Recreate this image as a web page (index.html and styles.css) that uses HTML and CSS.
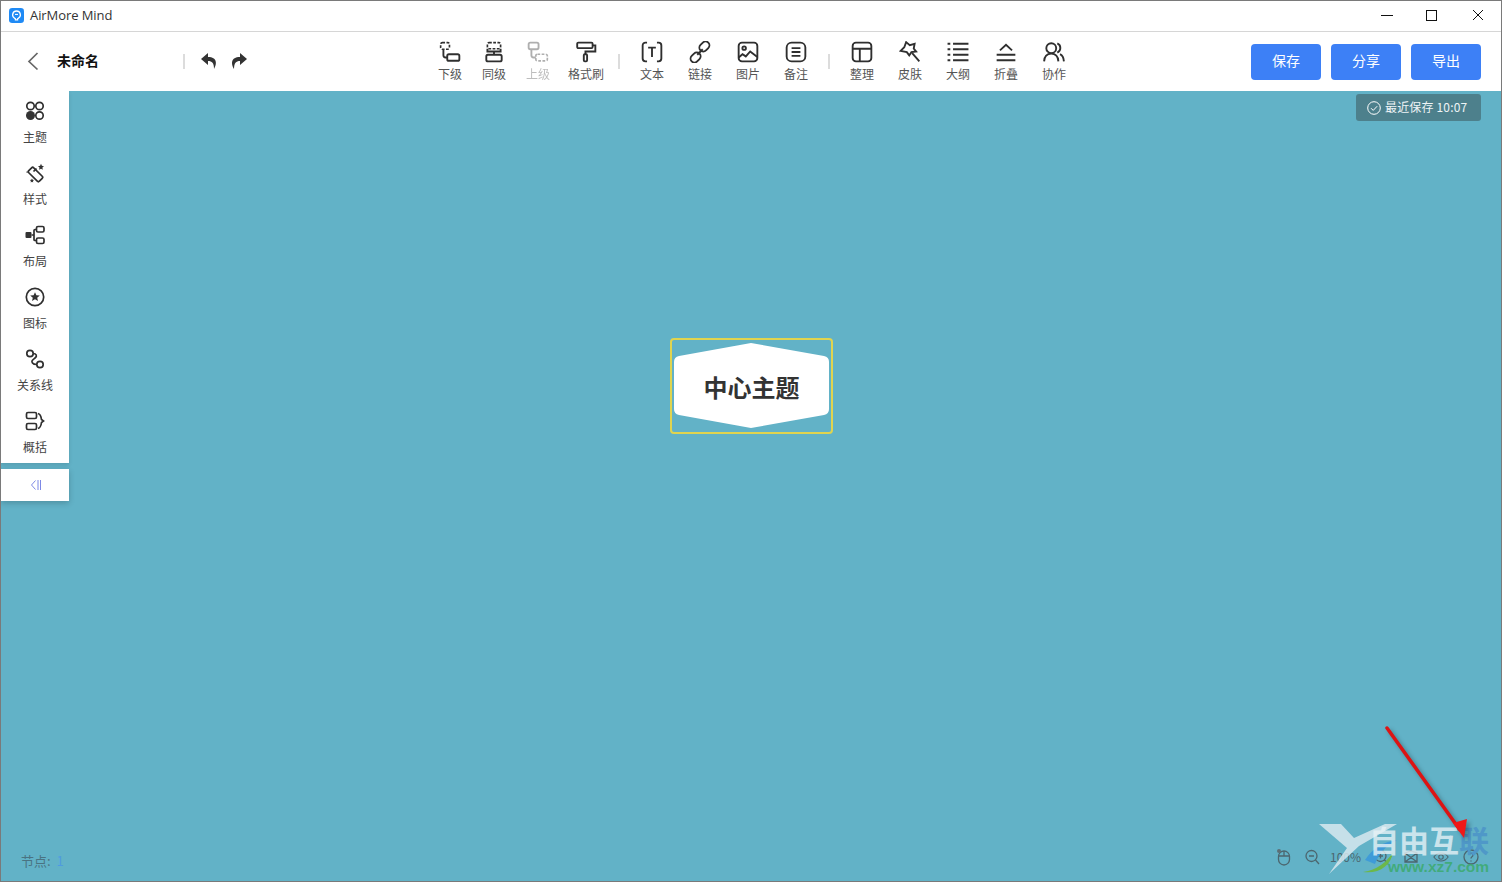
FILE: index.html
```html
<!DOCTYPE html>
<html lang="zh">
<head>
<meta charset="utf-8">
<title>AirMore Mind</title>
<link rel="stylesheet" href="styles.css">
</head>
<body>
<div class="window">
  <header class="titlebar">
    <svg class="app-logo" viewBox="0 0 14 14"><rect width="14" height="14" rx="3" fill="#1f8af5"/><path d="M7 2.800a3.600 3.600 0 0 1 2 6.600L8 10.200V11H6v-.8l-1-.8a3.600 3.600 0 0 1 2-6.600z" fill="none" stroke="#fff" stroke-width="1.200"/><path d="M5.600 6h2.800" stroke="#fff"/></svg>
    <span class="app-name">AirMore Mind</span>
    <div class="win-controls">
      <svg class="win-btn" viewBox="0 0 46 20"><path d="M18 10.500h12" stroke="#111" fill="none"/></svg>
      <svg class="win-btn" viewBox="0 0 46 20"><rect x="17.500" y="5.500" width="10" height="10" stroke="#111" fill="none"/></svg>
      <svg class="win-btn" viewBox="0 0 46 20"><path d="M18 5l10 10M28 5L18 15" stroke="#111" fill="none"/></svg>
    </div>
  </header>

  <nav class="toolbar">
    <div class="tb-left">
      <svg class="back" viewBox="0 0 12 20"><path d="M10.500 2L2 10.500l8.500 8" fill="none" stroke="#666" stroke-width="1.700"/></svg>
      <span class="doc-name">未命名</span>
      <i class="sep sep-doc"></i>
      <svg class="hist" viewBox="0 0 18 18"><path d="M8 1L1 7l7 6V9c4 0 6 2 6 8 3-5 3.500-12-6-12z" fill="#333"/></svg>
      <svg class="hist hist-redo" viewBox="0 0 18 18"><path d="M10 1l7 6-7 6V9c-4 0-6 2-6 8-3-5-3.500-12 6-12z" fill="#333"/></svg>
    </div>

    <div class="tb-center">
      <div class="tool w44"><svg viewBox="0 0 20 20"><rect x="1.500" y="1.500" width="8" height="6" rx="1.500" class="dash"/><rect x="7.500" y="12" width="11" height="6" rx="1.500" class="s"/><path d="M4 8v5a2 2 0 0 0 2 2h1.500" class="s"/></svg><span>下级</span></div>
      <div class="tool w44"><svg viewBox="0 0 20 20"><rect x="4" y="1.500" width="12" height="5.500" rx="1.500" class="dash"/><rect x="3" y="12.500" width="14" height="6" rx="1.500" class="s"/><path d="M4 7v2.500h12V7M10 9.500v3" class="s"/></svg><span>同级</span></div>
      <div class="tool w44 off"><svg viewBox="0 0 20 20"><rect x="1.500" y="1.500" width="9" height="6" rx="1.500" class="s"/><rect x="8" y="12" width="10.500" height="6" rx="1.500" class="dash"/><path d="M4 8v5a2 2 0 0 0 2 2h2" class="s"/></svg><span>上级</span></div>
      <div class="tool w48 gap-l"><svg viewBox="0 0 20 20"><rect x="2" y="1.500" width="14" height="5" rx="1" class="s"/><path d="M16 4h2.500v5.500H9.500V12" class="s"/><rect x="8" y="12" width="3" height="6.500" rx="1" class="s"/></svg><span>格式刷</span></div>
      <i class="sep sep-tool"></i>
      <div class="tool w48"><svg viewBox="0 0 20 20"><path d="M5.500 1.500H4A2.500 2.500 0 0 0 1.500 4v12A2.500 2.500 0 0 0 4 18.500h1.500M14.500 1.500H16A2.500 2.500 0 0 1 18.500 4v12a2.500 2.500 0 0 1-2.500 2.500h-1.500M6.500 6h7M10 6v8.500" class="s"/></svg><span>文本</span></div>
      <div class="tool w48"><svg viewBox="0 0 20 20"><rect x="9" y="1.500" width="10" height="7" rx="3.500" transform="rotate(-45 14 5)" class="s"/><rect x="1" y="11.500" width="10" height="7" rx="3.500" transform="rotate(-45 6 15)" class="s"/><path d="M7.500 12.500l5-5" class="s"/></svg><span>链接</span></div>
      <div class="tool w48"><svg viewBox="0 0 20 20"><rect x="1.500" y="1.500" width="17" height="17" rx="3" class="s"/><circle cx="6.500" cy="6.500" r="1.600" class="s"/><path d="M1.500 15l3.500-3 3 2 4-4.500 6.500 5" class="s"/></svg><span>图片</span></div>
      <div class="tool w48"><svg viewBox="0 0 20 20"><rect x="1.500" y="1.500" width="17" height="17" rx="4.500" class="s"/><path d="M6 6.500h8M6 10h8M6 13.500h8" class="s"/></svg><span>备注</span></div>
      <i class="sep sep-tool"></i>
      <div class="tool w48"><svg viewBox="0 0 20 20"><rect x="1.500" y="1.500" width="17" height="17" rx="3" class="s"/><path d="M1.500 7h17M8 7v11.500" class="s"/></svg><span>整理</span></div>
      <div class="tool w48"><svg viewBox="0 0 20 20"><path d="M6.500 1l3.300 2.800 4.400-1.300-.8 4.300 2.200 2.700-4.300.6-2 3-2.200-3L1.500 9l3.300-3.300z" class="s"/><path d="M12 11l6.500 7.500" class="s"/></svg><span>皮肤</span></div>
      <div class="tool w48"><svg viewBox="0 0 20 20"><path d="M.5 2.500h2.500M.5 7.500h2.500M.5 12.500h2.500M.5 17.500h2.500M5.500 2.500H19.500M5.500 7.500H19.500M5.500 12.500H19.500M5.500 17.500H19.500" class="s"/></svg><span>大纲</span></div>
      <div class="tool w48"><svg viewBox="0 0 20 20"><path d="M4.500 8.500L10 3.500l5.500 5M1.500 12.500h17M1.500 17.500h17" class="s"/></svg><span>折叠</span></div>
      <div class="tool w48"><svg viewBox="0 0 20 20"><circle cx="7.500" cy="6.500" r="4.500" class="s"/><path d="M1 18.500c.3-4.500 2.500-7 6.500-7s6.200 2.500 6.500 7M13 2.200a4.500 4.500 0 0 1 0 8.300M15.500 12c2 1 3.300 3.300 3.500 6.500" class="s"/></svg><span>协作</span></div>
    </div>

    <div class="tb-right">
      <button class="action">保存</button>
      <button class="action">分享</button>
      <button class="action">导出</button>
    </div>
  </nav>

  <main class="canvas">
    <aside class="side">
      <div class="side-list">
        <div class="side-item"><svg viewBox="0 0 20 20"><circle cx="5.500" cy="5" r="3.700" class="s"/><circle cx="14.500" cy="5" r="3.700" class="s"/><circle cx="14.500" cy="14.500" r="3.700" class="s"/><circle cx="5.500" cy="14.500" r="4.500" fill="#333"/></svg><span>主题</span></div>
        <div class="side-item"><svg viewBox="0 0 20 20"><rect x="3" y="8" width="15" height="7" rx="1.500" transform="rotate(45 10.500 11.500)" class="s"/><path d="M8.500 8.500l3-3" class="s"/><path d="M16 .8l.9 2 2.100.4-1.600 1.400.4 2.100-1.800-1-1.900 1 .4-2.100-1.500-1.400 2.100-.4zM7 15.500l.6 1.300 1.400.2-1 1 .2 1.500-1.200-.7-1.300.7.200-1.500-1-1 1.400-.2zM1.500 8.500h1.200v1.200H1.500z" fill="#333"/></svg><span>样式</span></div>
        <div class="side-item"><svg viewBox="0 0 20 20"><rect x=".5" y="7" width="6" height="6" rx="1" fill="#333"/><rect x="11.500" y="1.500" width="7.500" height="5.500" rx="1.500" class="s"/><rect x="11.500" y="13" width="7.500" height="5.500" rx="1.500" class="s"/><path d="M6.500 10H9M11.500 4.500H10a1 1 0 0 0-1 1v9a1 1 0 0 0 1 1h1.500" class="s"/></svg><span>布局</span></div>
        <div class="side-item"><svg viewBox="0 0 20 20"><circle cx="10" cy="10" r="8.700" class="s"/><path d="M10 5.200l1.400 3.100 3.400.3-2.600 2.200.8 3.300-3-1.800-3 1.800.8-3.300-2.600-2.200 3.400-.3z" fill="#333"/></svg><span>图标</span></div>
        <div class="side-item"><svg viewBox="0 0 20 20"><circle cx="5" cy="4.500" r="3.200" class="s"/><circle cx="15" cy="15.500" r="3.200" class="s"/><path d="M8 4.500c3.500 0 4.500 2.500 2 4.500s-4 3-2.500 5c1 1.500 3 1.500 4.300 1.500" class="s"/></svg><span>关系线</span></div>
        <div class="side-item"><svg viewBox="0 0 20 20"><rect x="1.500" y="1.500" width="10" height="6" rx="1.500" class="s"/><rect x="1.500" y="12.500" width="10" height="6" rx="1.500" class="s"/><path d="M13 2.500c2 .5 3 2.500 3.500 6l2 1.500-2 1.500c-.5 3.500-1.500 5.500-3.500 6" class="s"/></svg><span>概括</span></div>
      </div>
      <div class="collapse"><svg viewBox="0 0 12 12"><path d="M5.500 1.500L1.500 6l4 4.500M8 1v10M10.500 1v10" fill="none" stroke="#7d89e6"/></svg></div>
    </aside>

    <div class="saved"><svg viewBox="0 0 14 14"><circle cx="7" cy="7" r="6.300" fill="none" stroke="#fff"/><path d="M4 7.200l2.200 2.200 4-4.200" fill="none" stroke="#fff"/></svg><span>最近保存 10:07</span></div>

    <div class="topic">
      <svg viewBox="0 0 155 85"><path d="M77 0L150 13Q155 14 155 19V66Q155 71 150 72L77 85L5 72Q0 71 0 66V19Q0 14 5 13Z" fill="#fff"/></svg>
      <span>中心主题</span>
    </div>

    <div class="status-left">节点: <b>1</b></div>

    <div class="status-right">
      <svg class="st-mouse" viewBox="0 0 16 18"><rect x="2.500" y="3" width="11" height="14" rx="5.500" class="b"/><path d="M8 3v5M2.500 8h11" class="b"/><circle cx="3" cy="3" r="2" fill="#5c6f76"/></svg>
      <svg class="st-out" viewBox="0 0 16 18"><circle cx="7.500" cy="8" r="5.500" class="b"/><path d="M11.500 12l3.500 4M5 8h5" class="b"/></svg>
      <span>100%</span>
      <svg viewBox="0 0 16 18"><circle cx="7.500" cy="8" r="5.500" class="b"/><path d="M11.500 12l3.500 4M5 8h5M7.500 5.500v5" class="b"/></svg>
      <svg viewBox="0 0 16 18"><path d="M2 5l6-2 6 2v9H2zM2 5l12 9M14 5L2 14" class="b"/></svg>
      <svg viewBox="0 0 18 18"><path d="M1 9c4-6 12-6 16 0-4 6-12 6-16 0z" class="b"/><circle cx="9" cy="9" r="2.500" class="b"/></svg>
      <svg viewBox="0 0 16 18"><circle cx="8" cy="9" r="7" class="b"/><path d="M6 7a2 2 0 1 1 3 1.800c-.7.400-1 .8-1 1.700M8 12.500v1" class="b"/></svg>
    </div>

    <div class="watermark">
      <svg class="wm-logo" viewBox="0 0 90 50"><path d="M0 0h22l13 14L66 0h12L40 22 10 50 28 24z" fill="#d8e8ee" opacity=".85"/><path d="M46 36C54 24 64 18 78 16 66 22 60 30 56 40z" fill="#3f9bd8"/><path d="M44 48C58 46 68 38 74 28 72 42 60 50 44 48z" fill="#6cb84a"/></svg>
      <span class="wm-name">自由互<em>联</em></span>
      <span class="wm-url">www.xz7.com</span>
    </div>

    <svg class="arrow" viewBox="0 0 100 120"><path d="M3 2L76 104" stroke="#dc1414" stroke-width="3.500" stroke-linecap="round"/><path d="M80 112L69 97 83 93z" fill="#f01818"/></svg>
  </main>
</div>
</body>
</html>
```
FILE: styles.css
```css
* { box-sizing: border-box; }
html, body { margin: 0; height: 100%; overflow: hidden; }
body { font-family: "Noto Sans CJK SC", "Noto Sans", sans-serif; color: #444; background: #fff; }

.window { width: 1502px; height: 882px; border: 1px solid #7a7a7a; display: flex; flex-direction: column; }

.titlebar { height: 31px; flex: none; display: flex; align-items: center; padding: 0 0 2px 8px; border-bottom: 1px solid #d6d6d6; }
.app-logo { width: 15px; height: 15px; }
.app-name { margin-left: 6px; font: 13px/16px "Open Sans", sans-serif; letter-spacing: -.08px; color: #333; }
.win-controls { margin-left: auto; display: flex; }
.win-btn { width: 46px; height: 20px; display: block; }

.toolbar { height: 59px; flex: none; display: flex; align-items: center; background: #fff; }
.tb-left { width: 427px; display: flex; align-items: center; padding-left: 26px; flex: none; }
.back { width: 12px; height: 20px; margin-bottom: 1px; }
.doc-name { margin: 0 0 3px 18px; width: 126px; font-size: 14px; font-weight: 700; color: #111; line-height: 20px; }
.sep { display: block; width: 2px; background: #dcdcdc; flex: none; }
.sep-doc { height: 15px; }
.hist { width: 18px; height: 18px; margin: 0 0 2px 15px; }
.hist-redo { margin-left: 12px; }

.tb-center { display: flex; align-items: center; flex: none; }
.tool { display: flex; flex-direction: column; align-items: center; height: 50px; padding-top: 4px; color: #555; font-size: 12px; line-height: 18px; flex: none; }
.tool svg { width: 22px; height: 22px; display: block; margin-bottom: 2px; }
.w44 { width: 44px; }
.w48 { width: 48px; }
.gap-l { margin-left: 2px; }
.off { opacity: .38; }
.sep-tool { height: 15px; margin: 0 8px; }

.s { fill: none; stroke: #2f2f2f; stroke-width: 1.700; }
.dash { fill: none; stroke: #2f2f2f; stroke-width: 1.500; stroke-dasharray: 2.500 1.300; }
.b { fill: none; stroke: #4c666f; stroke-width: 1.300; }

.tb-right { margin-left: auto; margin-right: 20px; display: flex; gap: 10px; }
.action { width: 70px; height: 36px; border: 0; border-radius: 4px; background: #3d80f6; color: #fff; font: 14px/20px "Noto Sans CJK SC", sans-serif; padding: 0 0 3px; }

.canvas { position: relative; flex: 1; background: #62b2c7; overflow: hidden; }

.side { position: absolute; left: 0; top: 0; width: 68px; }
.side-list { background: #fff; box-shadow: 0 2px 4px rgba(0,0,0,.12); }
.side-item { height: 62px; padding-top: 10px; display: flex; flex-direction: column; align-items: center; font-size: 12px; line-height: 18px; color: #444; }
.side-item svg { width: 20px; height: 20px; display: block; margin-bottom: 7px; }
.collapse { margin-top: 6px; height: 32px; background: #fff; display: flex; align-items: center; justify-content: center; box-shadow: 0 2px 6px rgba(0,0,0,.2); }
.collapse svg { width: 12px; height: 12px; margin-left: 2px; }

.saved { position: absolute; top: 3px; right: 20px; width: 125px; height: 27px; background: #4d808c; border-radius: 3px; display: flex; align-items: center; padding: 0 0 0 11px; gap: 4px; color: #eef4f6; font-size: 12px; line-height: 16px; }
.saved svg { width: 14px; height: 14px; }
.saved span { letter-spacing: .17px; margin-bottom: 2px; }

.topic { position: absolute; left: 669px; top: 247px; width: 163px; height: 96px; border: 2px solid #e0d44f; border-radius: 4px; padding: 3px 2px; }
.topic svg { display: block; width: 155px; height: 85px; }
.topic span { position: absolute; inset: 0; display: flex; align-items: center; justify-content: center; font-size: 24px; font-weight: 700; color: #333; }

.status-left { position: absolute; left: 20px; bottom: 10px; font-size: 13px; line-height: 20px; color: #4a7382; }
.status-left b { font-weight: 400; color: #4f9be0; margin-left: 3px; }

.status-right { position: absolute; left: 1275px; bottom: 15px; display: flex; align-items: center; color: #4c666f; font-size: 12px; line-height: 18px; }
.status-right svg { width: 16px; height: 18px; display: block; margin-right: 14px; }
.status-right .st-mouse { margin-right: 12px; }
.status-right .st-out { margin-right: 10px; }
.status-right span { width: 36px; margin-right: 7px; }

.watermark { position: absolute; left: 1318px; top: 733px; width: 180px; height: 50px; pointer-events: none; }
.wm-logo { position: absolute; left: 0; top: 0; width: 90px; height: 50px; }
.wm-name { position: absolute; left: 50px; top: -3px; font-size: 30px; line-height: 36px; font-weight: 700; color: rgba(232,243,247,.78); white-space: nowrap; }
.wm-name em { font-style: normal; color: #4f98c8; }
.wm-url { position: absolute; left: 69px; top: 34px; font: 700 15.500px/18px "Liberation Sans", sans-serif; color: rgba(60,170,110,.85); white-space: nowrap; }

.arrow { position: absolute; left: 1383px; top: 635px; width: 100px; height: 120px; filter: drop-shadow(3px 3px 2px rgba(0,0,0,.3)); }
```
